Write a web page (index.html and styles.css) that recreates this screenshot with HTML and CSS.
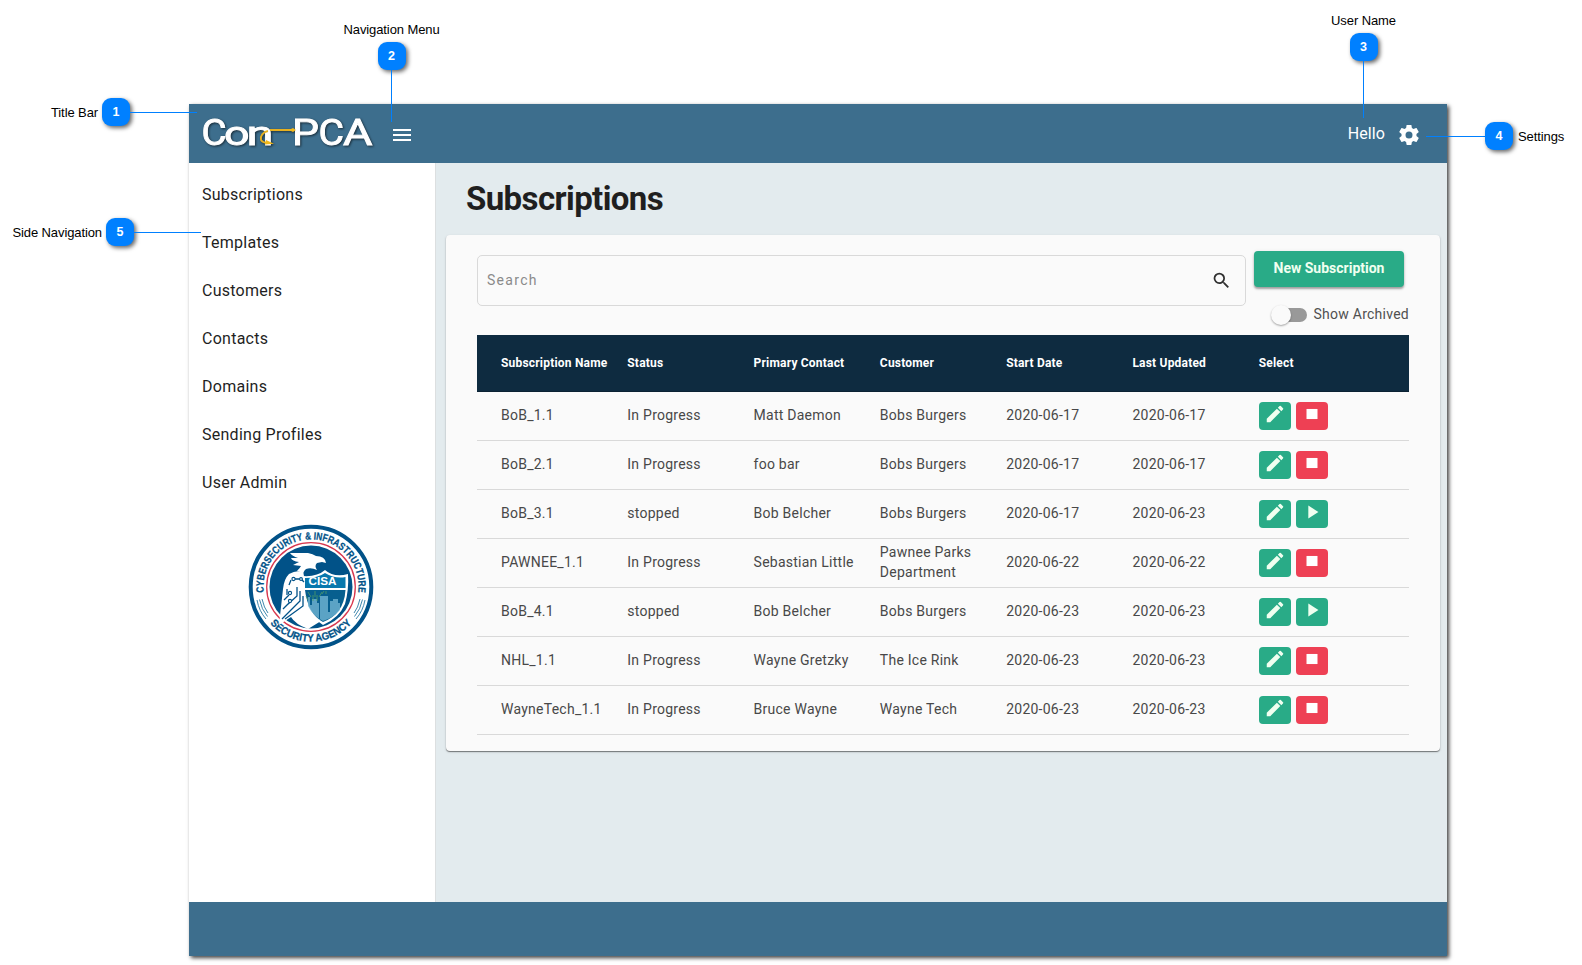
FILE: index.html
```html
<!DOCTYPE html>
<html lang="en">
<head>
<meta charset="utf-8">
<title>Con-PCA Subscriptions</title>
<link rel="stylesheet" href="styles.css">
</head>
<body>
<svg class="defs" aria-hidden="true">
  <symbol id="pencil" viewBox="0 0 24 24"><path d="M3 17.25V21h3.75L17.81 9.94l-3.75-3.75L3 17.25zM20.71 7.04a1 1 0 0 0 0-1.41l-2.34-2.34a1 1 0 0 0-1.41 0l-1.83 1.83 3.75 3.75 1.83-1.83z"/></symbol>
  <symbol id="stop" viewBox="0 0 24 24"><path d="M6 6.500h12v11H6z"/></symbol>
  <symbol id="play" viewBox="0 0 24 24"><path d="M8 5v14l11-7z"/></symbol>
</svg>
<div class="window">
  <header class="titlebar">
    <svg class="logo" viewBox="0 0 176 40" width="176" height="40">
      <g class="word">
        <text x="0.500" y="33" textLength="25" lengthAdjust="spacingAndGlyphs" class="cap">C</text>
        <text x="23" y="33" textLength="25.500" lengthAdjust="spacingAndGlyphs" class="low">o</text>
        <text x="45.500" y="33" textLength="27" lengthAdjust="spacingAndGlyphs" class="low">n</text>
        <text x="91" y="33" textLength="27" lengthAdjust="spacingAndGlyphs" class="cap">P</text>
        <text x="117.500" y="33" textLength="25.500" lengthAdjust="spacingAndGlyphs" class="cap">C</text>
        <text x="142" y="33" textLength="29.500" lengthAdjust="spacingAndGlyphs" class="cap">A</text>
      </g>
      <path class="hook" d="M91 18H69M67 19c-5 1-8 5-7 9 1 2 4 3 8 3"/>
      <path class="barb" d="M65 28l8 3.800-9 .8zM88 18l4-2 3 2-3 2z"/>
    </svg>
    <svg class="burger" viewBox="0 0 24 24" width="24" height="24"><path d="M3 18h18v-2H3v2zm0-5h18v-2H3v2zm0-7v2h18V6H3z"/></svg>
    <span class="hello">Hello</span>
    <svg class="gear" viewBox="0 0 24 24" width="24" height="24"><path d="M19.430 12.980c.04-.32.07-.64.07-.98s-.03-.66-.07-.98l2.110-1.650c.19-.15.24-.42.12-.64l-2-3.460c-.12-.22-.39-.3-.61-.22l-2.490 1c-.52-.4-1.080-.73-1.690-.98l-.38-2.650C14.460 2.180 14.250 2 14 2h-4c-.25 0-.46.18-.49.42l-.38 2.650c-.61.25-1.170.59-1.690.98l-2.490-1c-.23-.09-.49 0-.61.22l-2 3.460c-.13.22-.07.49.12.64l2.110 1.650c-.04.32-.07.65-.07.98s.03.66.07.98l-2.110 1.650c-.19.15-.24.42-.12.64l2 3.460c.12.22.39.3.61.22l2.490-1c.52.4 1.080.73 1.690.98l.38 2.650c.03.24.24.42.49.42h4c.25 0 .46-.18.49-.42l.38-2.650c.61-.25 1.170-.59 1.690-.98l2.490 1c.23.09.49 0 .61-.22l2-3.460c.12-.22.07-.49-.12-.64l-2.110-1.650zM12 15.500a3.500 3.500 0 1 1 0-7 3.500 3.500 0 0 1 0 7z"/></svg>
  </header>
  <div class="body">
    <nav class="side">
      <a class="link">Subscriptions</a>
      <a class="link">Templates</a>
      <a class="link">Customers</a>
      <a class="link">Contacts</a>
      <a class="link">Domains</a>
      <a class="link">Sending Profiles</a>
      <a class="link">User Admin</a>
      <svg class="seal" viewBox="-63 -63 126 126" width="126" height="126">
        <defs>
          <path id="arcTop" d="M-44.300 17A47.500 47.500 0 1 1 44.300 17"/>
          <path id="arcLow" d="M-50 22A54.600 54.600 0 0 0 50 22"/>
        </defs>
        <circle r="60.300" fill="#fff" stroke="#015288" stroke-width="4"/>
        <circle r="44.300" fill="#fff" stroke="#d8384f" stroke-width="1.300"/>
        <circle r="41.500" fill="#015288"/>
        <text class="ring"><textPath href="#arcTop" startOffset="50%" text-anchor="middle" textLength="160" lengthAdjust="spacingAndGlyphs">CYBERSECURITY &amp; INFRASTRUCTURE</textPath></text>
        <text class="ring"><textPath href="#arcLow" startOffset="50%" text-anchor="middle" textLength="92" lengthAdjust="spacingAndGlyphs">SECURITY AGENCY</textPath></text>
        <path class="waves" d="M-54 13q2 11 9 19M-51.500 12.500q2 10 8 17M-49 12q2 9 6 14M54 13q-2 11-9 19M51.500 12.500q-2 10-8 17M49 12q-2 9-6 14"/>
        <path fill="#fff" d="M-21-34H-3Q2-33 5-31Q14-31 15-24L11-25L6-24Q3-21 6-17Q0-20-5-18Q-9-15-7-10Q-9-15-14-16Q-11-19-10-21L-18-22L-12-25Q-19-26-20-29L-13-29Q-19-31-21-34Z"/>
        <path fill="#fff" d="M-22-13Q-13-18-8-14L-6-8L-3 17Q2 27 10 34L-3 42Q-16 37-20 30L-32 38L-30 20L-28 2Q-27-8-22-13Z"/>
        <path fill="#fff" d="M-8-11Q6-10 14-17Q23-9 37-13Q38 3 34 17Q28 31 12 38Q-2 30-6 13Z"/>
        <path fill="#0878ad" d="M-6-9Q7-9 14-14Q24-8 34.500-10V1H-6Z"/>
        <path fill="#075f8f" d="M-6 3H34.500Q33 27 12 35Q-3 27-6 3Z"/>
        <path fill="#71b4d2" d="M9 33V9H17V25H19V14H22V12H27V16H29V23Q22 31 12 34Q2 29-3 19V10H-1V18H1V12H6V16H8V33Z" opacity=".8"/>
        <path class="glow" d="M4 10V4M0 10L-3 5M8 10L11 5M2 14V8M6 14V8M-3 13L-5 9M11 7L13 4M15 7V4"/>
        <path class="feather" d="M-16-8H-10L-7-5M-22-2L-20-7M-14 0V9L-24 18M-11 4V14L-29 32M-8 9V19L-26 32M-24 2V8M-27 13L-22 8M-28 22L-21 15"/>
        <g class="node"><circle cx="-17.500" cy="-8" r="1.600"/><circle cx="-10" cy="-8" r="1.400"/><circle cx="-21" cy="6" r="1.600"/><circle cx="-21" cy="14" r="1.600"/></g>
        <text class="cisa" x="11.500" y="-2" text-anchor="middle" textLength="28" lengthAdjust="spacingAndGlyphs">CISA</text>
      </svg>
    </nav>
    <main class="main">
      <h1 class="heading">Subscriptions</h1>
      <section class="card">
        <div class="tools">
          <div class="search"><span class="placeholder">Search</span>
            <svg class="lens" viewBox="0 0 24 24" width="21" height="21"><path d="M15.500 14h-.79l-.28-.27A6.470 6.470 0 0 0 16 9.500 6.500 6.500 0 1 0 9.500 16c1.610 0 3.090-.59 4.230-1.570l.27.28v.79l5 4.990L20.490 19l-4.990-5zm-6 0C7.010 14 5 11.990 5 9.500S7.010 5 9.500 5 14 7.010 14 9.500 11.990 14 9.500 14z"/></svg>
          </div>
          <div class="actions">
            <button class="new">New Subscription</button>
            <div class="toggle"><span class="track"><span class="thumb"></span></span><span class="tlabel">Show Archived</span></div>
          </div>
        </div>
        <div class="table">
          <div class="row head"><span>Subscription Name</span><span>Status</span><span>Primary Contact</span><span>Customer</span><span>Start Date</span><span>Last Updated</span><span>Select</span></div>
          <div class="row"><span>BoB_1.1</span><span>In Progress</span><span>Matt Daemon</span><span>Bobs Burgers</span><span>2020-06-17</span><span>2020-06-17</span><div class="btns"><i class="btn"><svg><use href="#pencil"/></svg></i><i class="btn red"><svg><use href="#stop"/></svg></i></div></div>
          <div class="row"><span>BoB_2.1</span><span>In Progress</span><span>foo bar</span><span>Bobs Burgers</span><span>2020-06-17</span><span>2020-06-17</span><div class="btns"><i class="btn"><svg><use href="#pencil"/></svg></i><i class="btn red"><svg><use href="#stop"/></svg></i></div></div>
          <div class="row"><span>BoB_3.1</span><span>stopped</span><span>Bob Belcher</span><span>Bobs Burgers</span><span>2020-06-17</span><span>2020-06-23</span><div class="btns"><i class="btn"><svg><use href="#pencil"/></svg></i><i class="btn"><svg><use href="#play"/></svg></i></div></div>
          <div class="row"><span>PAWNEE_1.1</span><span>In Progress</span><span>Sebastian Little</span><span>Pawnee Parks Department</span><span>2020-06-22</span><span>2020-06-22</span><div class="btns"><i class="btn"><svg><use href="#pencil"/></svg></i><i class="btn red"><svg><use href="#stop"/></svg></i></div></div>
          <div class="row"><span>BoB_4.1</span><span>stopped</span><span>Bob Belcher</span><span>Bobs Burgers</span><span>2020-06-23</span><span>2020-06-23</span><div class="btns"><i class="btn"><svg><use href="#pencil"/></svg></i><i class="btn"><svg><use href="#play"/></svg></i></div></div>
          <div class="row"><span>NHL_1.1</span><span>In Progress</span><span>Wayne Gretzky</span><span>The Ice Rink</span><span>2020-06-23</span><span>2020-06-23</span><div class="btns"><i class="btn"><svg><use href="#pencil"/></svg></i><i class="btn red"><svg><use href="#stop"/></svg></i></div></div>
          <div class="row"><span>WayneTech_1.1</span><span>In Progress</span><span>Bruce Wayne</span><span>Wayne Tech</span><span>2020-06-23</span><span>2020-06-23</span><div class="btns"><i class="btn"><svg><use href="#pencil"/></svg></i><i class="btn red"><svg><use href="#stop"/></svg></i></div></div>
        </div>
      </section>
    </main>
  </div>
  <footer class="footer"></footer>
</div>

<div class="callout c1"><span class="label">Title Bar</span><b class="badge">1</b><span class="lead"></span></div>
<div class="callout vert c2"><span class="label">Navigation Menu</span><b class="badge">2</b><span class="lead"></span></div>
<div class="callout vert c3"><span class="label">User Name</span><b class="badge">3</b><span class="lead"></span></div>
<div class="callout c4"><span class="lead"></span><b class="badge">4</b><span class="label">Settings</span></div>
<div class="callout c5"><span class="label">Side Navigation</span><b class="badge">5</b><span class="lead"></span></div>
</body>
</html>
```

FILE: styles.css
```css
* { box-sizing: border-box; }
body { margin: 0; width: 1582px; height: 965px; padding: 104px 0 0 189px; overflow: hidden; background: #fff; position: relative; font-family: Roboto, "Liberation Sans", sans-serif; color: #1f1f1f; }
.defs { position: absolute; width: 0; height: 0; }

.window { width: 1258px; height: 852px; display: flex; flex-direction: column; box-shadow: 2px 2px 4px rgba(0,0,0,.75); }
.titlebar { height: 59px; flex: none; background: #3d6e8d; display: flex; align-items: center; padding: 0 26px 0 12px; }
.logo { margin: 0 13px 4px 0; filter: drop-shadow(1px 1px 1px rgba(0,0,0,.6)); overflow: visible; }
.word text { fill: #fff; stroke: #fff; stroke-width: .9; font-family: Roboto, sans-serif; }
.word .cap { font-size: 37px; }
.word .low { font-size: 34px; }
.hook { fill: none; stroke: #e6b020; stroke-width: 1.800; }
.barb { fill: #f2b91c; }
.burger, .gear { fill: #fff; }
.burger { margin-top: 3px; }
.hello { margin-left: auto; margin-right: 12px; color: #fff; font-size: 16px; letter-spacing: .1px; }
.gear { margin-top: 3px; }

.body { flex: 1; display: flex; min-height: 0; }
.side { width: 247px; background: #fff; border-right: 1px solid #dcdfe0; padding: 8px 0 0 13px; display: flex; flex-direction: column; }
.link { height: 48px; line-height: 48px; font-size: 16px; letter-spacing: .26px; }
.seal { margin: 17px 0 0 46px; display: block; }
.ring { font: bold 10.500px "Liberation Sans", sans-serif; fill: #015288; stroke: #015288; stroke-width: .25; }
.cisa { font: bold 11px "Liberation Sans", sans-serif; fill: #fff; }
.waves { fill: none; stroke: #3f88ae; stroke-width: 1; }
.feather { fill: none; stroke: #015288; stroke-width: 1.300; }
.node { fill: #fff; stroke: #015288; stroke-width: 1.100; }
.glow { fill: none; stroke: #4f9c68; stroke-width: .8; }

.main { flex: 1; background: #e3ebee; padding: 15px 7px 0 10px; }
.heading { margin: 0 0 15px 20px; font-size: 33px; line-height: 42px; font-weight: 700; letter-spacing: -.6px; }
.card { height: 516px; background: #fafafa; border-radius: 4px; padding: 16px 31px 0; box-shadow: 0 1px 1px rgba(0,0,0,.45), 0 1px 3px rgba(0,0,0,.12); }
.tools { display: flex; height: 84px; }
.search { margin-top: 4px; width: 769px; height: 51px; border: 1px solid #d9d9d9; border-radius: 5px; display: flex; align-items: center; justify-content: space-between; padding: 0 13px 0 9px; font-size: 14px; letter-spacing: 1.300px; color: #8a8a8a; }
.lens { fill: #303030; }
.placeholder { line-height: 20px; margin-top: -1px; }
.actions { flex: 1; padding-left: 8px; }
.new { display: block; width: 150px; height: 36px; padding: 0 0 2px; border: 0; border-radius: 4px; background: #29ab87; color: #f0fff0; font: 700 14px Roboto, sans-serif; box-shadow: 0 2px 2px rgba(0,0,0,.3), 0 1px 4px rgba(0,0,0,.12); }
.toggle { display: flex; align-items: center; justify-content: flex-end; height: 20px; margin-top: 17px; font-size: 14px; letter-spacing: .25px; color: #505050; }
.track { position: relative; width: 34px; height: 14px; border-radius: 7px; background: #999; margin: 2px 7px 0 0; }
.thumb { position: absolute; left: -2px; top: -3px; width: 20px; height: 20px; border-radius: 50%; background: #fafafa; box-shadow: 0 1px 2px rgba(0,0,0,.35); }
.tlabel { white-space: nowrap; }

.row { display: grid; grid-template-columns: repeat(7, 1fr); align-items: center; height: 49px; padding: 0 24px; border-bottom: 1px solid #d9d9d9; font-size: 14px; line-height: 20px; letter-spacing: .25px; color: #484848; }
.row > span { padding-bottom: 2px; }
.head { height: 57px; background: #0e2b40; border-bottom-color: #0b2233; color: #fff; font-size: 12px; font-weight: 700; letter-spacing: .2px; white-space: nowrap; }
.head > span { padding-bottom: 0; }
.btns { display: flex; gap: 5px; }
.btn { width: 32px; height: 28px; border-radius: 4px; background: #29ab87; display: flex; justify-content: center; padding-top: 1px; }
.btn svg { width: 22px; height: 22px; fill: #f0fff0; }
.red { background: #ee4054; }
.red svg { fill: #fff; }
.footer { height: 54px; flex: none; background: #3d6e8d; }

.callout { position: absolute; display: flex; align-items: center; font: 13px "Liberation Sans", sans-serif; letter-spacing: -.1px; color: #000; white-space: nowrap; }
.badge { width: 28px; height: 28px; border-radius: 9px; background: #0080ff; color: #fff; display: flex; align-items: center; justify-content: center; font-size: 12.500px; box-shadow: 2px 2px 4px rgba(0,0,0,.6); flex: none; }
.lead { background: #0080ff; height: 1px; }
.vert { flex-direction: column; }
.vert .lead { width: 1px; }
.label { line-height: 16px; padding-top: 1px; }
.c1 { top: 98px; right: 1385px; } .c1 .lead { width: 67px; } .c1 .label, .c5 .label { margin-right: 4px; }
.c5 { top: 218px; right: 1381px; } .c5 .lead { width: 67px; }
.c2 { top: 21px; left: 341px; width: 101px; } .c2 .lead { height: 52px; } .c2 .label, .c3 .label { margin-bottom: 4px; }
.c3 { top: 12px; left: 1313px; width: 101px; } .c3 .lead { height: 57px; }
.c4 { top: 122px; left: 1426px; } .c4 .lead { width: 59px; } .c4 .label { margin-left: 5px; }
```
